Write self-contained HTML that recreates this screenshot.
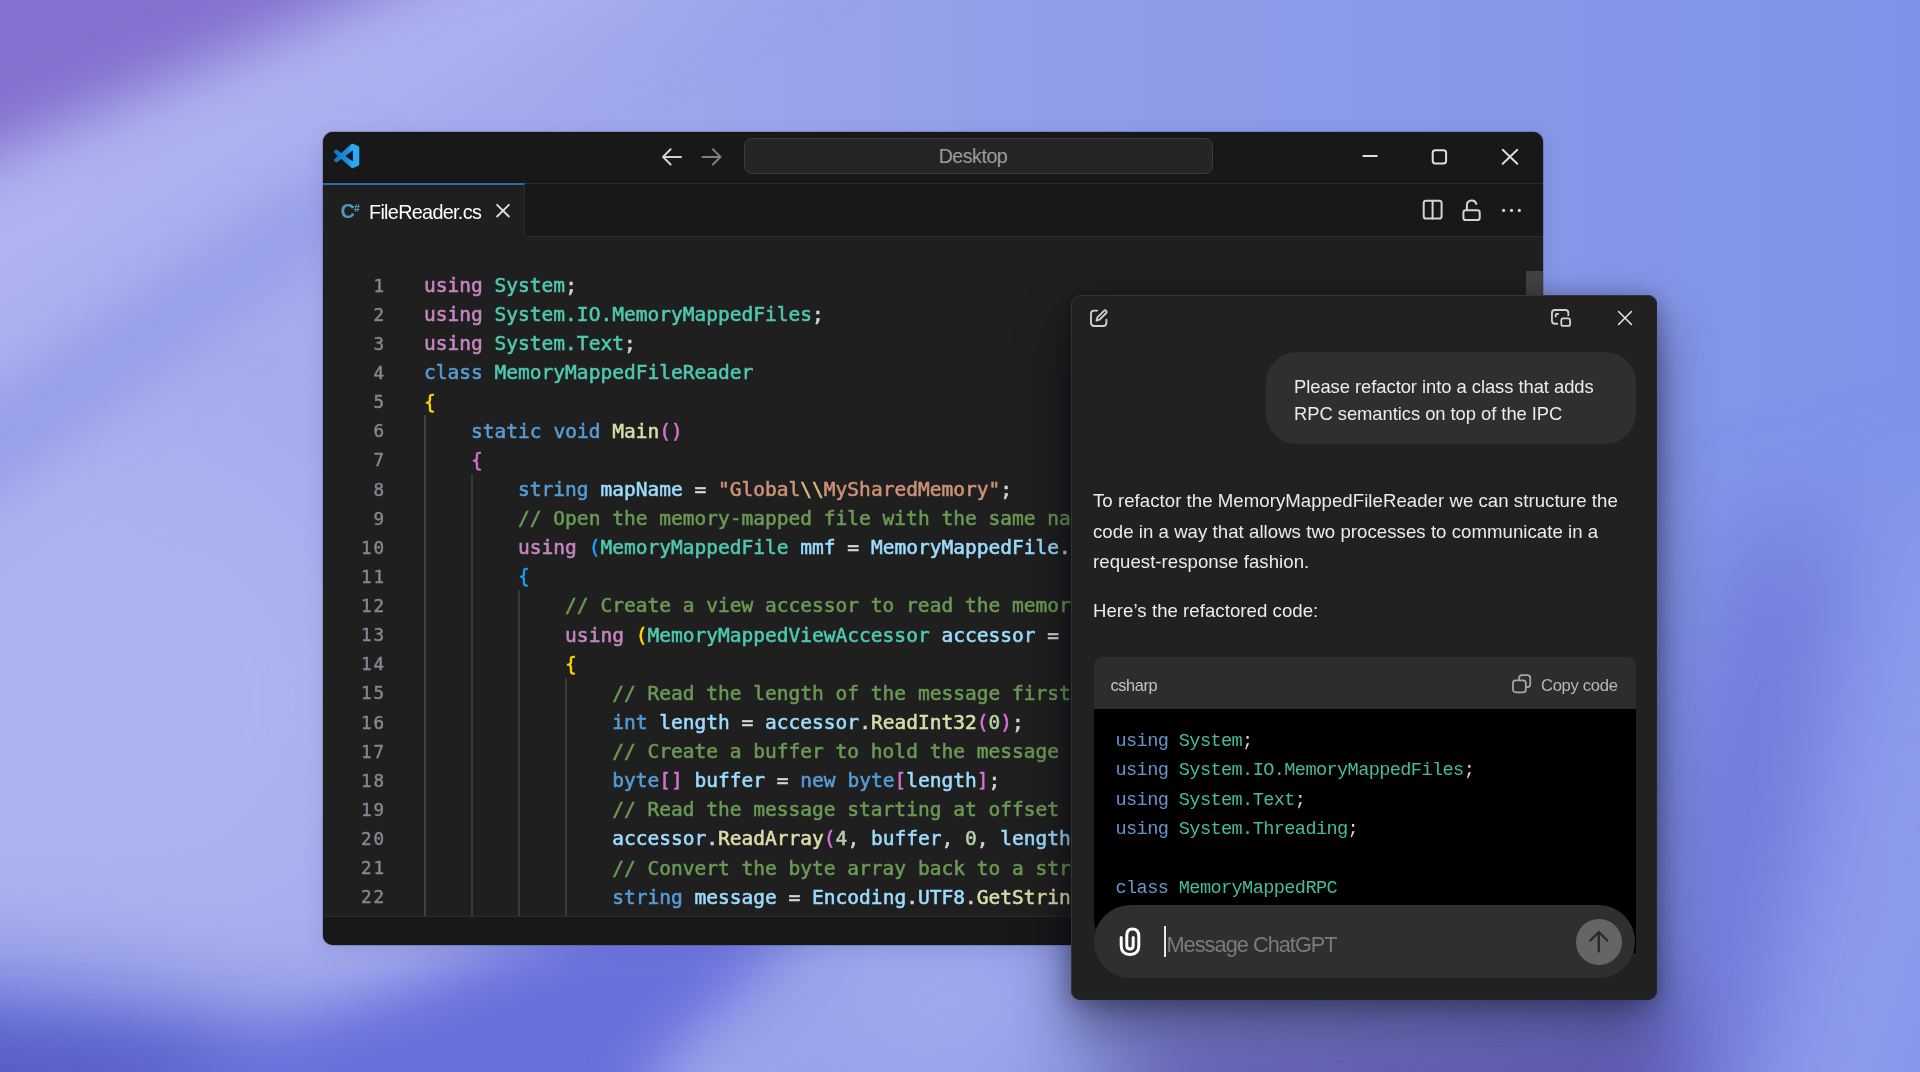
<!DOCTYPE html>
<html lang="en">
<head>
<meta charset="utf-8">
<title>Desktop</title>
<style>
*{box-sizing:border-box;margin:0;padding:0}
html,body{width:1920px;height:1072px;overflow:hidden;background:#9ea6ec}
body{position:relative;font-family:"Liberation Sans",sans-serif;color:#e8e8e8}
#bg{position:absolute;left:0;top:0;width:1920px;height:1072px}
.abs{position:absolute}

/* ---------- VS Code window ---------- */
#vs{position:absolute;left:323px;top:132px;width:1220px;height:813px;background:#1f1f1f;border-radius:10px;overflow:hidden;box-shadow:0 0 0 1px rgba(20,20,30,.18),0 5px 20px rgba(30,30,80,.10)}
#vs .title{position:absolute;left:0;top:0;width:100%;height:52px;background:#181818;border-bottom:1px solid #2b2b2b}
#vs .tabs{position:absolute;left:0;top:52px;width:100%;height:53px;background:#181818;border-bottom:1px solid #2b2b2b}
#vs .tab{position:absolute;left:0;top:-1px;width:201.5px;height:54px;background:#1f1f1f;border-top:2px solid #2a6ea9;border-right:1px solid #2b2b2b}
#vs .tabname{position:absolute;left:46px;top:16px;font-size:19.8px;color:#fff;letter-spacing:-.68px;white-space:nowrap}
#vs .cs{position:absolute;left:17.5px;top:16px;font-size:20px;font-weight:bold;color:#519aba;line-height:1;white-space:nowrap}
#vs .cs i{font-style:normal;font-size:10.5px;position:relative;top:-6px;left:-1px;letter-spacing:-1px}
#vs .ico{position:absolute;left:0;top:0}
#vs .search{position:absolute;left:420.5px;top:5.5px;width:469px;height:36px;border-radius:8px;background:#252525;border:1px solid #3b3b3b;color:#9d9d9d;font-size:19.5px;text-align:center;line-height:35px;letter-spacing:-.42px;padding-right:10px}
#vs .foot{position:absolute;left:0;top:784px;width:100%;height:29px;background:#181818;border-top:1px solid #2b2b2b}
#vs .scroll{position:absolute;left:1203px;top:139px;width:17px;height:30px;background:#434343}

#code{position:absolute;left:0;top:139px;width:100%;font-family:"DejaVu Sans Mono","Liberation Mono",monospace;font-size:19.55px;line-height:29.13px;color:#d4d4d4}
#code .l{position:relative;height:29.13px}
#code .n{position:absolute;left:0;top:.7px;width:63px;text-align:right;color:#838991;font-size:17.6px;letter-spacing:1.9px;-webkit-text-stroke:.45px currentColor}
#code .c{position:absolute;left:101px;white-space:pre;-webkit-text-stroke:.55px currentColor}
.g{position:absolute;width:1.3px;background:#404040}

/* token colours */
.k{color:#c586c0}.b{color:#569cd6}.t{color:#4ec9b0}.v{color:#9cdcfe}.f{color:#dcdcaa}
.s{color:#ce9178}.e{color:#d7ba7d}.m{color:#6a9955}.u{color:#b5cea8}
.y{color:#ffd700}.p{color:#da70d6}.o{color:#179fff}

/* ---------- ChatGPT window ---------- */
#gpt{position:absolute;left:1071px;top:295px;width:586px;height:705px;background:#212121;border-radius:9px;overflow:hidden;box-shadow:0 30px 56px rgba(4,2,22,.46),0 3px 24px rgba(2,2,12,.32)}
#gpt .edge{position:absolute;left:0;top:0;width:100%;height:100%;border-radius:9px;border:1px solid #343434;border-right-color:#262626;border-bottom-color:#262626;pointer-events:none}
#gpt svg{position:absolute;overflow:visible}
#gpt .bubble{position:absolute;left:194.5px;top:57px;width:370px;height:92px;border-radius:31px;background:#2f2f2f}
#gpt .btxt{position:absolute;left:28.5px;top:22px;font-size:18.4px;line-height:26.6px;color:#ececec;white-space:nowrap;letter-spacing:-.05px}
#gpt .msg{position:absolute;left:22px;font-size:18.6px;color:#ececec;white-space:nowrap;letter-spacing:.05px;line-height:30.6px}
#gpt .cb{position:absolute;left:22.5px;top:362px;width:542.5px;height:296px;background:#000;border-radius:7px 7px 0 34px;overflow:hidden}
#gpt .cbh{position:absolute;left:0;top:0;width:100%;height:52px;background:#2d2d2d}
#gpt .lang{position:absolute;left:17px;top:18.5px;font-size:16.4px;letter-spacing:-.4px;color:#c4c4c4}
#gpt .copy{position:absolute;left:447.5px;top:19px;font-size:16.6px;letter-spacing:-.3px;color:#b8b8b8;white-space:nowrap}
#gpt pre{position:absolute;left:22px;top:69.7px;font-family:"Liberation Mono",monospace;font-size:18.6px;letter-spacing:-.61px;line-height:29.54px;color:#d6d6d6}
#gpt .kw{color:#6696cd}#gpt .cl{color:#46bba1}
#gpt .pill{position:absolute;left:22.5px;top:610px;width:541px;height:73px;border-radius:36.5px;background:#2f2f2f}
#gpt .ph{position:absolute;left:73px;top:27.3px;font-size:21.7px;color:#7b7b7b;letter-spacing:-.95px;white-space:nowrap}
#gpt .caret{position:absolute;left:70.5px;top:21px;width:2px;height:31px;background:#e6e6e6}
#gpt .send{position:absolute;left:482.5px;top:14px;width:45.5px;height:45.5px;border-radius:50%;background:#656565}
</style>
</head>
<body>
<svg id="bg" viewBox="0 0 1920 1072" preserveAspectRatio="none">
  <defs>
    <linearGradient id="base" x1="0" y1="0" x2="1" y2="0">
      <stop offset="0" stop-color="#abb0ef"/><stop offset=".3" stop-color="#a1a8ed"/><stop offset=".55" stop-color="#909de9"/><stop offset="1" stop-color="#7f92e7"/>
    </linearGradient>
    <filter id="b60" x="-30%" y="-30%" width="160%" height="160%"><feGaussianBlur stdDeviation="55"/></filter>
    <filter id="b35" x="-30%" y="-30%" width="160%" height="160%"><feGaussianBlur stdDeviation="30"/></filter>
    <filter id="b22" x="-30%" y="-30%" width="160%" height="160%"><feGaussianBlur stdDeviation="22"/></filter>
  </defs>
  <rect width="1920" height="1072" fill="url(#base)"/>
  <g filter="url(#b60)">
    <!-- light band below purple wedge -->
    <polygon points="-200,250 -200,400 820,-120 560,-120" fill="#b1b6f2" opacity=".75"/>
    <!-- left light region -->
    <ellipse cx="120" cy="700" rx="270" ry="240" fill="#acb2ee" opacity=".9"/>
    <!-- right violet strip -->
    <polygon points="1750,540 1835,520 1800,800 1745,1090 1640,1090 1690,800" fill="#6a6ed4" opacity=".9"/>
    <!-- right light band -->
    <polygon points="1890,520 2000,480 2000,800 1860,1250 1730,1250" fill="#909cec" opacity=".9"/>
    <!-- soft bottom-left band -->
    <polygon points="-200,958 120,985 300,1040 420,1085 560,1100 560,1400 -200,1400" fill="#6873da"/>
    <!-- soft blue under vs -->
    <ellipse cx="950" cy="1000" rx="120" ry="80" fill="#a6acef" opacity=".7"/>
    <!-- under gpt -->
    <polygon points="1120,1050 1690,1020 1720,1300 1040,1300" fill="#5a4fa8"/>
  </g>
  <g filter="url(#b35)">
    <!-- top-left purple wedge -->
    <polygon points="-300,-300 1050,-300 -300,279" fill="#846fce"/>
    <!-- subtle darker streak left -->
    <polygon points="-100,560 -100,462 360,158 360,212" fill="#8a93e6" opacity=".7"/>
    <!-- bottom-left dark band -->
    <polygon points="-100,1022 200,1042 440,1058 560,1072 640,1100 640,1300 -100,1300" fill="#585dc6"/>
    <!-- blue under vs window -->
    <polygon points="590,915 812,915 654,1072 600,1300 0,1300 0,1145" fill="#696fdb"/>
  </g>
</svg>

<div id="vs">
  <div class="title">
    <div class="search">Desktop</div>
  </div>
  <div class="tabs">
    <div class="tab"><span class="cs">C<i>#</i></span><span class="tabname">FileReader.cs</span></div>
  </div>
  <svg class="ico" width="1220" height="106" viewBox="0 0 1220 106" fill="none" stroke-linecap="round" stroke-linejoin="round">
    <defs><linearGradient id="vsg" x1="0" y1="0" x2="1" y2="0"><stop offset="0" stop-color="#1273c6"/><stop offset=".55" stop-color="#1f8fe0"/><stop offset=".75" stop-color="#2ea8f6"/><stop offset="1" stop-color="#2ea8f6"/></linearGradient></defs>
    <!-- VS Code logo -->
    <g transform="translate(10.8 11.6) scale(1.0625 1.03)">
      <path fill="url(#vsg)" d="M23.15 2.587L18.21.21a1.494 1.494 0 0 0-1.705.29l-9.46 8.63-4.12-3.128a.999.999 0 0 0-1.276.057L.327 7.261A1 1 0 0 0 .326 8.74L3.899 12 .326 15.26a1 1 0 0 0 .001 1.479L1.65 17.94a.999.999 0 0 0 1.276.057l4.12-3.128 9.46 8.63a1.492 1.492 0 0 0 1.704.29l4.942-2.377A1.5 1.5 0 0 0 24 20.06V3.939a1.5 1.5 0 0 0-.85-1.352zm-5.146 14.861L10.826 12l7.178-5.448v10.896z"/>
    </g>
    <!-- nav arrows -->
    <path stroke="#d2d2d2" stroke-width="2" d="M358 24.9H340.2M347.6 17.3L340 24.9L347.6 32.5"/>
    <path stroke="#808080" stroke-width="2" d="M379.5 24.9H397.3M389.9 17.3L397.5 24.9L389.9 32.5"/>
    <!-- window controls -->
    <path stroke="#dedede" stroke-width="2" d="M1040.3 24.1H1053.8"/>
    <rect x="1109.7" y="18.3" width="13.4" height="13.1" rx="2.6" stroke="#dedede" stroke-width="2"/>
    <path stroke="#dedede" stroke-width="1.9" d="M1179.7 17.8L1194.3 31.8M1194.3 17.8L1179.7 31.8"/>
    <!-- tab close -->
    <path stroke="#e2e2e2" stroke-width="1.8" d="M174.1 72.8L185.9 84.5M185.9 72.8L174.1 84.5"/>
    <!-- split editor -->
    <rect x="1100.7" y="68.7" width="17.9" height="17.9" rx="2.4" stroke="#d4d4d4" stroke-width="2"/>
    <path stroke="#d4d4d4" stroke-width="2" d="M1109.6 68.7V86.6"/>
    <!-- unlock -->
    <rect x="1140.4" y="78.3" width="16.3" height="9.8" rx="2.4" stroke="#d4d4d4" stroke-width="2"/>
    <path stroke="#d4d4d4" stroke-width="2" d="M1143.9 78.3V73.3a4.85 4.85 0 0 1 9.5-1.4"/>
    <!-- more -->
    <g fill="#d4d4d4"><circle cx="1180.6" cy="78.4" r="1.6"/><circle cx="1188.5" cy="78.4" r="1.6"/><circle cx="1196.3" cy="78.4" r="1.6"/></g>
  </svg>
  <div id="code">
<div class="l"><span class="n">1</span><span class="c"><span class="k">using</span> <span class="t">System</span>;</span></div>
<div class="l"><span class="n">2</span><span class="c"><span class="k">using</span> <span class="t">System.IO.MemoryMappedFiles</span>;</span></div>
<div class="l"><span class="n">3</span><span class="c"><span class="k">using</span> <span class="t">System.Text</span>;</span></div>
<div class="l"><span class="n">4</span><span class="c"><span class="b">class</span> <span class="t">MemoryMappedFileReader</span></span></div>
<div class="l"><span class="n">5</span><span class="c"><span class="y">{</span></span></div>
<div class="l"><span class="n">6</span><span class="c">    <span class="b">static</span> <span class="b">void</span> <span class="f">Main</span><span class="p">()</span></span></div>
<div class="l"><span class="n">7</span><span class="c">    <span class="p">{</span></span></div>
<div class="l"><span class="n">8</span><span class="c">        <span class="b">string</span> <span class="v">mapName</span> = <span class="s">"Global<span class="e">\\</span>MySharedMemory"</span>;</span></div>
<div class="l"><span class="n">9</span><span class="c">        <span class="m">// Open the memory-mapped file with the same na</span></span></div>
<div class="l"><span class="n">10</span><span class="c">        <span class="k">using</span> <span class="o">(</span><span class="t">MemoryMappedFile</span> <span class="v">mmf</span> = <span class="v">MemoryMappedFile</span>.</span></div>
<div class="l"><span class="n">11</span><span class="c">        <span class="o">{</span></span></div>
<div class="l"><span class="n">12</span><span class="c">            <span class="m">// Create a view accessor to read the memor</span></span></div>
<div class="l"><span class="n">13</span><span class="c">            <span class="k">using</span> <span class="y">(</span><span class="t">MemoryMappedViewAccessor</span> <span class="v">accessor</span> =</span></div>
<div class="l"><span class="n">14</span><span class="c">            <span class="y">{</span></span></div>
<div class="l"><span class="n">15</span><span class="c">                <span class="m">// Read the length of the message first</span></span></div>
<div class="l"><span class="n">16</span><span class="c">                <span class="b">int</span> <span class="v">length</span> = <span class="v">accessor</span>.<span class="f">ReadInt32</span><span class="p">(</span><span class="u">0</span><span class="p">)</span>;</span></div>
<div class="l"><span class="n">17</span><span class="c">                <span class="m">// Create a buffer to hold the message</span></span></div>
<div class="l"><span class="n">18</span><span class="c">                <span class="b">byte</span><span class="p">[]</span> <span class="v">buffer</span> = <span class="b">new</span> <span class="b">byte</span><span class="p">[</span><span class="v">length</span><span class="p">]</span>;</span></div>
<div class="l"><span class="n">19</span><span class="c">                <span class="m">// Read the message starting at offset</span></span></div>
<div class="l"><span class="n">20</span><span class="c">                <span class="v">accessor</span>.<span class="f">ReadArray</span><span class="p">(</span><span class="u">4</span>, <span class="v">buffer</span>, <span class="u">0</span>, <span class="v">length</span></span></div>
<div class="l"><span class="n">21</span><span class="c">                <span class="m">// Convert the byte array back to a str</span></span></div>
<div class="l"><span class="n">22</span><span class="c">                <span class="b">string</span> <span class="v">message</span> = <span class="v">Encoding</span>.<span class="v">UTF8</span>.<span class="f">GetStrin</span></span></div>
</div>
  <div class="g" style="left:101.4px;top:283.4px;height:500.6px;background:#404040"></div>
  <div class="g" style="left:148.4px;top:341.7px;height:442.3px;background:#393939"></div>
  <div class="g" style="left:195.4px;top:458.2px;height:325.8px;background:#393939"></div>
  <div class="g" style="left:242.4px;top:545.6px;height:238.4px;background:#393939"></div>
  <div class="scroll"></div>
  <div class="foot"></div>
</div>

<div id="gpt">
  <!-- new chat -->
  <svg style="left:19px;top:14px" width="18" height="18" viewBox="0 0 18 18" fill="none" stroke="#cfcfcf" stroke-width="1.9" stroke-linecap="round" stroke-linejoin="round">
    <path d="M7.2 1.6H4.2Q1 1.6 1 4.8V13.8Q1 17 4.2 17H13.2Q16.4 17 16.4 13.8V10.6"/>
    <path d="M6.6 11.6L7.4 8.4L14 1.8Q15.1 .7 16.2 1.8Q17.3 2.9 16.2 4L9.6 10.6Z"/>
  </svg>
  <!-- picture in picture -->
  <svg style="left:479.5px;top:14px" width="20" height="17.7" viewBox="0 0 21 18" preserveAspectRatio="none" fill="none" stroke="#d2d2d2" stroke-width="1.9" stroke-linecap="round" stroke-linejoin="round">
    <path d="M6.6 15H4Q1 15 1 12V4Q1 1 4 1H15.2Q18.2 1 18.2 4V6.4"/>
    <rect x="10.8" y="9.6" width="9.2" height="7.6" rx="2"/>
    <path d="M4.9 7.6V6.4Q4.9 5 6.3 5H7.5"/>
  </svg>
  <!-- close -->
  <svg style="left:547.4px;top:15.8px" width="14" height="14" viewBox="0 0 15 15" fill="none" stroke="#e4e4e4" stroke-width="1.7" stroke-linecap="round">
    <path d="M.6 .6L14.4 14.4M14.4 .6L.6 14.4"/>
  </svg>

  <div class="bubble"><div class="btxt">Please refactor into a class that adds<br>RPC semantics on top of the IPC</div></div>
  <div class="msg" style="top:191px">To refactor the MemoryMappedFileReader we can structure the<br>code in a way that allows two processes to communicate in a<br>request-response fashion.</div>
  <div class="msg" style="top:301px">Here’s the refactored code:</div>
  <div class="cb">
    <div class="cbh">
      <span class="lang">csharp</span>
      <svg style="left:418px;top:16.7px" width="19.2" height="19.4" viewBox="0 0 20 20" fill="none" stroke="#a8a8a8" stroke-width="1.8" stroke-linejoin="round">
        <path d="M7.4 6.2V4Q7.4 1 10.4 1H16Q19 1 19 4V10.6Q19 13.6 16 13.6H14.6"/>
        <rect x="1" y="6.6" width="13.4" height="12.4" rx="3"/>
      </svg>
      <span class="copy">Copy code</span>
    </div>
<pre><span class="kw">using</span> <span class="cl">System</span>;
<span class="kw">using</span> <span class="cl">System.IO.MemoryMappedFiles</span>;
<span class="kw">using</span> <span class="cl">System.Text</span>;
<span class="kw">using</span> <span class="cl">System.Threading</span>;

<span class="kw">class</span> <span class="cl">MemoryMappedRPC</span></pre>
  </div>
  <div class="pill">
    <!-- paperclip -->
    <svg style="left:25.5px;top:21.5px" width="22" height="30" viewBox="0 0 22 30" fill="none" stroke="#fff" stroke-width="3" stroke-linecap="round">
      <path d="M2.2 10.4V18.6Q2.2 27.6 11 27.6Q19.8 27.6 19.8 18.6V9.4Q19.8 2 13.4 2Q7.8 2 7.8 8.6V18.4Q7.8 22 11 22Q14.2 22 14.2 18.4V10.4"/>
    </svg>
    <div class="caret"></div>
    <div class="ph">Message ChatGPT</div>
    <div class="send">
      <svg style="left:0;top:0" width="45.5" height="45.5" viewBox="0 0 45.5 45.5" fill="none" stroke="#2a2a2a" stroke-width="2.4" stroke-linecap="round" stroke-linejoin="round">
        <path d="M22.8 32.3V13M14.3 21.5L22.8 13L31.3 21.5"/>
      </svg>
    </div>
  </div>
  <div class="edge"></div>
</div>
</body>
</html>
